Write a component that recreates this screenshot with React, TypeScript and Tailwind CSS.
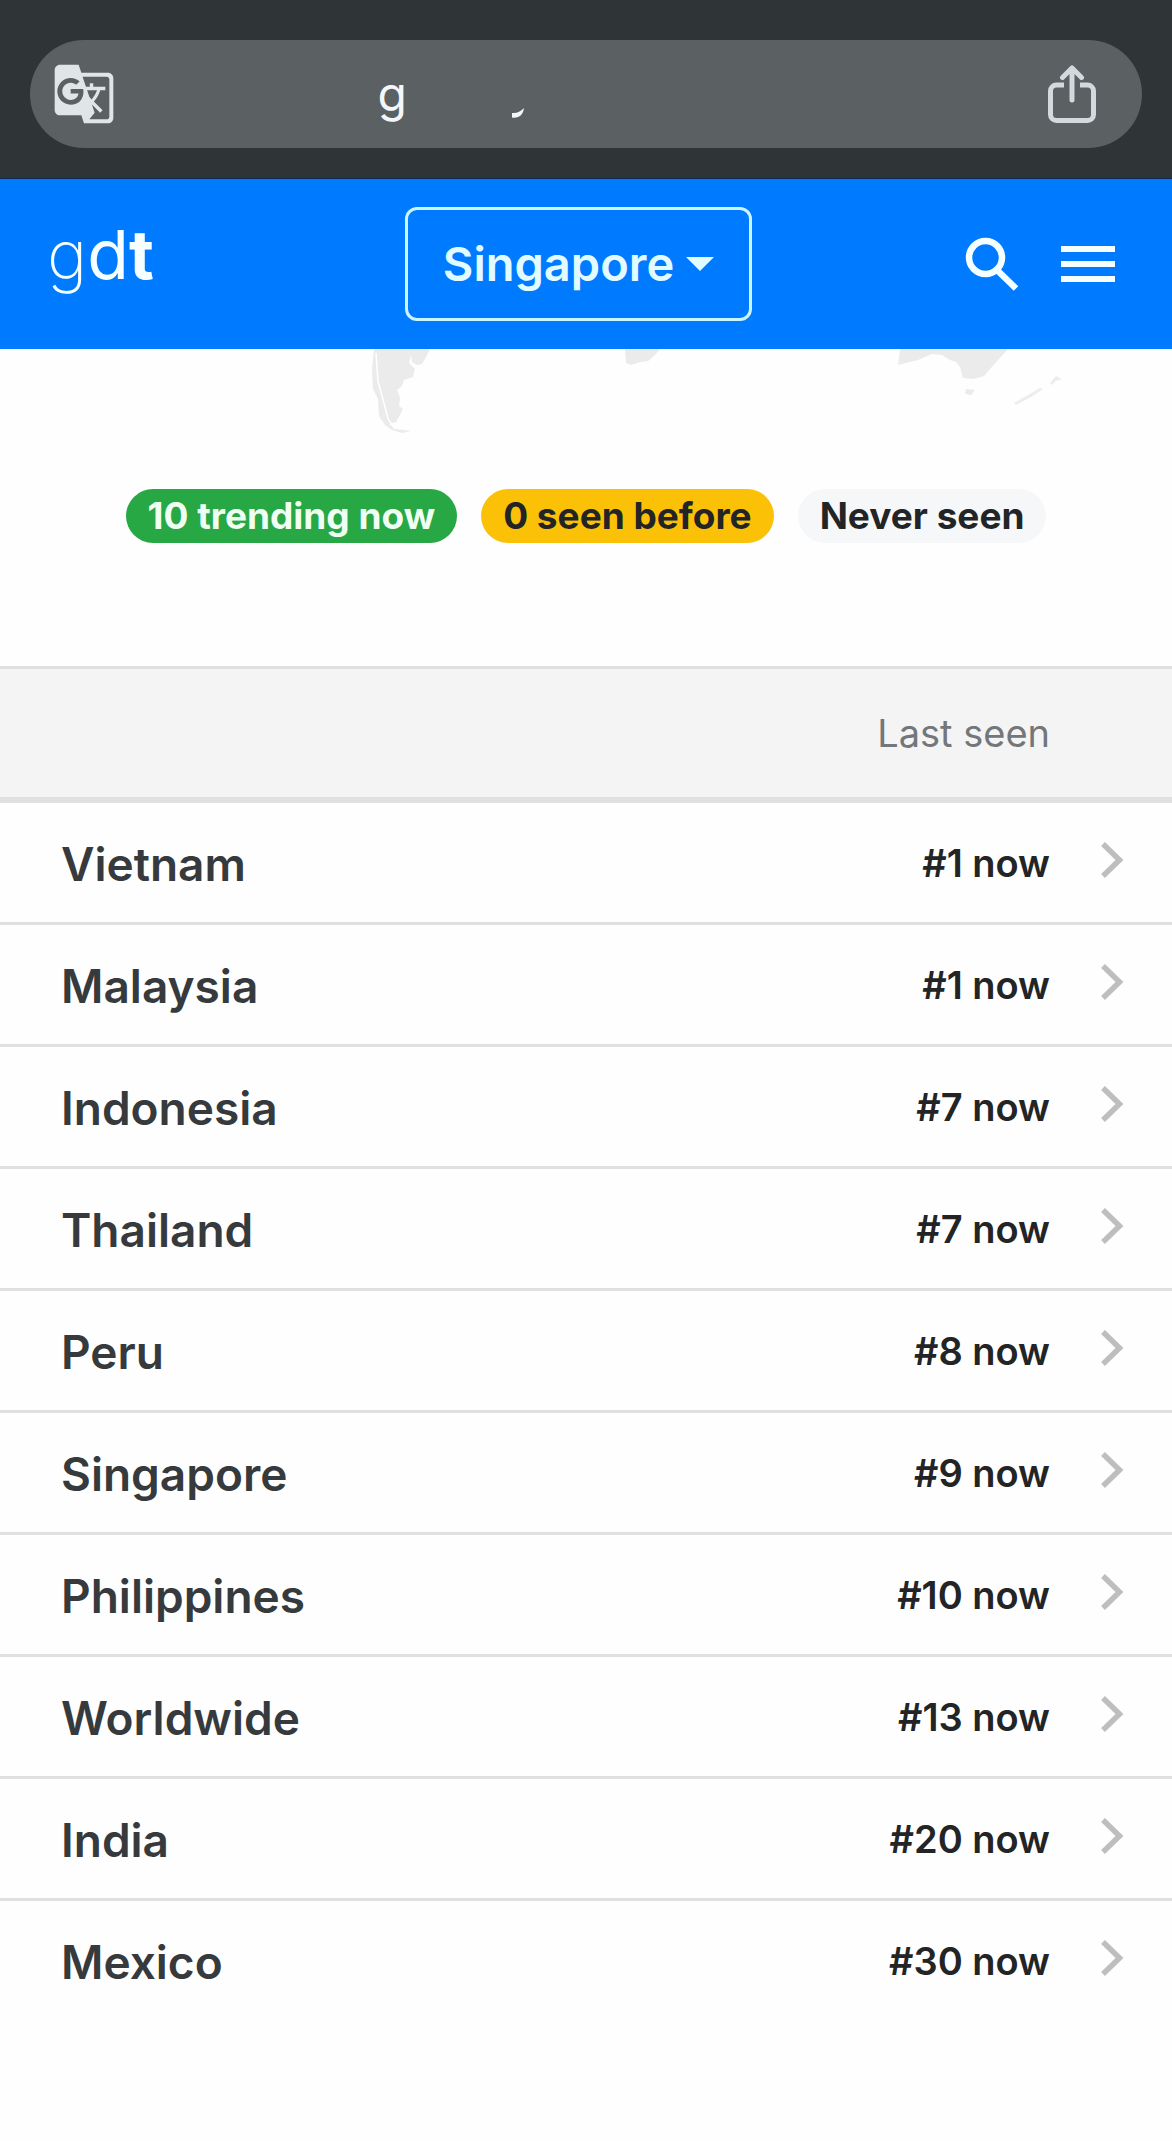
import { MdGTranslate } from "react-icons/md";

const rows = [
  { country: "Vietnam", rank: "#1 now" },
  { country: "Malaysia", rank: "#1 now" },
  { country: "Indonesia", rank: "#7 now" },
  { country: "Thailand", rank: "#7 now" },
  { country: "Peru", rank: "#8 now" },
  { country: "Singapore", rank: "#9 now" },
  { country: "Philippines", rank: "#10 now" },
  { country: "Worldwide", rank: "#13 now" },
  { country: "India", rank: "#20 now" },
  { country: "Mexico", rank: "#30 now" },
];

function ShareIcon() {
  return (
    <svg viewBox="0 0 50 58" className="h-[58px] w-[50px]" fill="none" stroke="#d5d8dc" strokeWidth="5" strokeLinecap="round" strokeLinejoin="round">
      <path d="M17 20H9.500a6 6 0 0 0-6 6v23.500a6 6 0 0 0 6 6h31a6 6 0 0 0 6-6V26a6 6 0 0 0-6-6H33" strokeLinecap="butt" />
      <path d="M25 35V4M15.500 12.500 25 3l9.500 9.500" />
    </svg>
  );
}

function AddressBar() {
  return (
    <div className="border-b border-[#0f2a52] bg-[#2f3437] px-[30px] pt-10 pb-[30px]">
      <div className="flex h-[108px] items-center rounded-full bg-[#5b6063] pr-[45px] pl-[22px]">
        <button type="button" aria-label="Translate page">
          <MdGTranslate className="size-[64px] text-[#e1e5e8]" />
        </button>
        <div className="flex min-w-0 grow items-center justify-center">
          <input
            type="text"
            aria-label="Address"
            defaultValue="g"
            className="w-8 bg-transparent text-[48px] leading-[56px] text-[#f4f7fa] outline-none"
          />
          <svg viewBox="0 0 376 56" className="h-14 w-[376px]" aria-hidden="true">
            <path d="M102 47c5 .5 8-1 12-5-1 7-5 10.500-12 9.500Z" fill="#f4f7fa" />
          </svg>
        </div>
        <button type="button" aria-label="Share">
          <ShareIcon />
        </button>
      </div>
    </div>
  );
}

function SiteHeader() {
  return (
    <header className="flex h-[170px] items-center justify-between bg-[#007bff] pr-[57px] pl-[47px] text-[#f5ffff]">
      <a href="#home" className="w-[240px] pb-5 text-[68px] leading-[80px]">
        <span className="font-extralight">g</span>
        <span className="font-normal">d</span>
        <span className="font-bold">t</span>
      </a>
      <button
        type="button"
        aria-haspopup="listbox"
        className="flex h-[114px] items-center gap-3 rounded-xl border-3 border-[#c9f5ff] px-[35px] text-[47px] leading-[60px] font-semibold text-[#e2fbff]"
      >
        Singapore
        <svg viewBox="0 0 28 14" className="h-[14px] w-7" aria-hidden="true">
          <path d="M0 0h28L14 14Z" fill="currentColor" />
        </svg>
      </button>
      <div className="flex w-[245px] items-center justify-end gap-[42px]">
        <button type="button" aria-label="Search">
          <svg viewBox="0 0 54 54" className="size-[54px]" fill="none" stroke="currentColor">
            <circle cx="20.500" cy="20.500" r="16.500" strokeWidth="6.500" />
            <path d="M33 34 51 51.500" strokeWidth="6.500" />
          </svg>
        </button>
        <button type="button" aria-label="Menu">
          <svg viewBox="0 0 54 36" className="h-9 w-[54px]" fill="currentColor">
            <path d="M0 0h54v6H0zM0 15h54v6H0zM0 30h54v6H0z" />
          </svg>
        </button>
      </div>
    </header>
  );
}

function WorldMap() {
  return (
    <svg viewBox="0 0 1172 92" className="block w-full" fill="#ebebeb" role="img" aria-label="World map">
      <path d="M374 0H430L426 8L422 15L417 16L412 13L411 6L409 14L415 20L413 28L404 31L402 37L397 41L400 49L399 57L403 60L400 66L396 73L389 75L396 80L411 82L402 84L392 81L385 76L379 67L378 50L373 40L372 20Z" />
      <path d="M376 4L378 32L385 58L388 70L395 80" fill="none" stroke="#fff" strokeWidth="1.500" />
      <path d="M625 0H660L655 6L648 12L640 13L631 16L626 14Z" />
      <path d="M900 0H1008L999 10L990 20L984 27L974 30L963 29L960 18L956 13L950 11L942 6L932 5L918 11L898 16Z" />
      <path d="M966 40L975 41L971 46L965 45Z" />
      <path d="M1014 54L1028 46L1040 39L1043 40L1031 48L1016 56ZM1050 34L1056 27L1062 30L1056 32L1052 36Z" fill="#ededed" />
    </svg>
  );
}

function Legend() {
  return (
    <ul className="mt-12 mb-[123px] flex justify-center gap-6 text-[37px] leading-[54px] font-bold text-[#222426]">
      <li className="rounded-full bg-[#28a745] px-[22px] text-[#f0fff4]">10 trending now</li>
      <li className="rounded-full bg-[#fac107] px-[22px]">0 seen before</li>
      <li className="rounded-full bg-[#f6f7f9] px-[22px]">Never seen</li>
    </ul>
  );
}

function RankTable() {
  return (
    <table className="w-full border-separate border-spacing-0">
      <thead>
        <tr className="h-[137px] bg-[#f4f4f4] *:border-t-3 *:border-b-6 *:border-[#dfe0e1]">
          <th scope="col" aria-label="Country" />
          <th scope="col" className="text-right text-[38px] leading-[48px] font-normal text-[#72777b]">
            Last seen
          </th>
          <td className="w-[122px]" />
        </tr>
      </thead>
      <tbody>
        {rows.map((row) => (
          <tr key={row.country} className="h-[122px] *:border-b-3 *:border-[#dfe0e1] last:*:border-transparent">
            <th scope="row" className="pt-0.5 pl-[61px] text-left text-[46px] leading-[60px] font-semibold text-[#363a3d]">
              {row.country}
            </th>
            <td className="text-right text-[38px] leading-[48px] font-semibold text-[#222426]">{row.rank}</td>
            <td className="w-[122px] pb-1.5 pl-[51px]">
              <a href="#details" aria-label={`${row.country} details`} className="block">
                <svg viewBox="0 0 23 36" className="h-9 w-[23px]" fill="none" stroke="#bdbebf" strokeWidth="5.500">
                  <path d="M2 2 18.500 18 2 34" />
                </svg>
              </a>
            </td>
          </tr>
        ))}
      </tbody>
    </table>
  );
}

export default function App() {
  return (
    <div className="min-h-screen bg-[#fefefe] font-['Inter',sans-serif]">
      <AddressBar />
      <SiteHeader />
      <main>
        <WorldMap />
        <Legend />
        <RankTable />
      </main>
    </div>
  );
}
